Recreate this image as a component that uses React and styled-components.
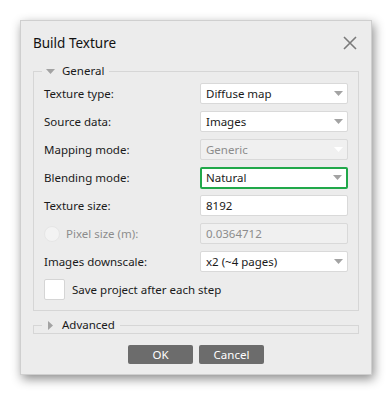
import React from 'react'
import styled, { createGlobalStyle } from 'styled-components'

const Global = createGlobalStyle`
  body {
    margin: 0;
    background: #ffffff;
    font-family: "Noto Sans", "Open Sans", sans-serif;
    font-size: 11.5px;
    color: #1a1a1a;
  }
`

const Page = styled.div`
  padding: 20px;
`

const Dialog = styled.div`
  box-sizing: border-box;
  width: 352px;
  height: 355px;
  background: #ececec;
  border: 1px solid #cfcfcf;
  box-shadow: 2px 4px 10px rgba(0, 0, 0, 0.45);
  padding: 0 12px;
  display: flex;
  flex-direction: column;
`

const TitleBar = styled.div`
  height: 42px;
  display: flex;
  align-items: center;
  justify-content: space-between;
  padding: 2px 2px 0 0;
  box-sizing: border-box;
`

const Title = styled.div`
  font-size: 13.5px;
  color: #111;
`

const Group = styled.fieldset`
  margin: ${p => p.$top || 0}px 0 0 0;
  padding: ${p => (p.$empty ? '0 10px' : '4px 10px 10px 10px')};
  border: 1px solid #d6d6d6;
  display: flex;
  flex-direction: column;
  gap: 7px;
`

const Legend = styled.legend`
  margin-left: -2px;
  padding: 0 5px 0 4px;
  line-height: 16px;
  display: flex;
  align-items: center;
  gap: 7px;
  color: #1a1a1a;
`

const ArrowBox = styled.span`
  width: 9px;
  display: flex;
  justify-content: center;
`

const Row = styled.div`
  height: 21px;
  display: flex;
  align-items: center;
  justify-content: space-between;
`

const Label = styled.span`
  color: ${p => (p.$disabled ? '#8c8c8c' : '#1a1a1a')};
  display: flex;
  align-items: center;
  gap: 6px;
`

const Field = styled.div`
  box-sizing: border-box;
  width: 148px;
  height: ${p => (p.$focus ? 22 : 21)}px;
  border: ${p => (p.$focus ? '2px solid #21a84a' : '1px solid #d9d9d9')};
  border-radius: 2px;
  background: ${p => (p.$disabled ? '#f0f0f0' : '#ffffff')};
  color: ${p => (p.$disabled ? '#8c8c8c' : '#1a1a1a')};
  display: flex;
  align-items: center;
  justify-content: space-between;
  padding: 0 4px 0 ${p => (p.$focus ? 4 : 5)}px;
`

const Radio = styled.span`
  width: 16px;
  height: 16px;
  border-radius: 50%;
  background: #f3f3f3;
  border: 1px solid #e6e6e6;
  box-sizing: border-box;
`

const Check = styled.span`
  width: 21px;
  height: 21px;
  box-sizing: border-box;
  border: 1px solid #d5d5d5;
  border-radius: 2px;
  background: #fff;
`

const CheckRow = styled.div`
  display: flex;
  align-items: center;
  gap: 7px;
  height: 21px;
`

const Buttons = styled.div`
  margin-top: 11px;
  display: flex;
  justify-content: center;
  gap: 6px;
`

const Button = styled.button`
  width: 65px;
  height: 19px;
  border: none;
  border-radius: 2px;
  background: #6c6c6c;
  color: #fff;
  font-family: inherit;
  font-size: 11.5px;
  padding: 0;
  line-height: 19px;
`

const Arrow = ({ dir = 'down', color = '#a3a3a3' }) =>
  dir === 'down' ? (
    <svg width="9" height="5" viewBox="0 0 9 5">
      <path d="M0 0H9L4.5 5Z" fill={color} />
    </svg>
  ) : (
    <svg width="5" height="9" viewBox="0 0 5 9">
      <path d="M0 0V9L5 4.5Z" fill={color} />
    </svg>
  )

const Close = () => (
  <svg width="14" height="14" viewBox="0 0 14 14">
    <path d="M1 1L13 13M13 1L1 13" stroke="#7a7a7a" strokeWidth="1.6" />
  </svg>
)

const Combo = ({ value, disabled, focus }) => (
  <Field $disabled={disabled} $focus={focus}>
    <span>{value}</span>
    <Arrow color={disabled ? '#ffffff' : '#a3a3a3'} />
  </Field>
)

const rows = [
  { label: 'Texture type:', value: 'Diffuse map', combo: true },
  { label: 'Source data:', value: 'Images', combo: true },
  { label: 'Mapping mode:', value: 'Generic', combo: true, disabled: true },
  { label: 'Blending mode:', value: 'Natural', combo: true, focus: true },
  { label: 'Texture size:', value: '8192' },
  { label: 'Pixel size (m):', value: '0.0364712', disabled: true, radio: true },
  { label: 'Images downscale:', value: 'x2 (~4 pages)', combo: true },
]

const App = () => (
  <Page>
    <Global />
    <Dialog>
      <TitleBar>
        <Title>Build Texture</Title>
        <Close />
      </TitleBar>
      <Group>
        <Legend>
          <ArrowBox><Arrow /></ArrowBox>
          General
        </Legend>
        {rows.map(r => (
          <Row key={r.label}>
            <Label $disabled={r.radio}>
              {r.radio && <Radio />}
              {r.label}
            </Label>
            {r.combo ? (
              <Combo value={r.value} disabled={r.disabled} focus={r.focus} />
            ) : (
              <Field $disabled={r.disabled}>{r.value}</Field>
            )}
          </Row>
        ))}
        <CheckRow>
          <Check />
          Save project after each step
        </CheckRow>
      </Group>
      <Group $top={6} $empty>
        <Legend>
          <ArrowBox><Arrow dir="right" /></ArrowBox>
          Advanced
        </Legend>
      </Group>
      <Buttons>
        <Button>OK</Button>
        <Button>Cancel</Button>
      </Buttons>
    </Dialog>
  </Page>
)

export default App
